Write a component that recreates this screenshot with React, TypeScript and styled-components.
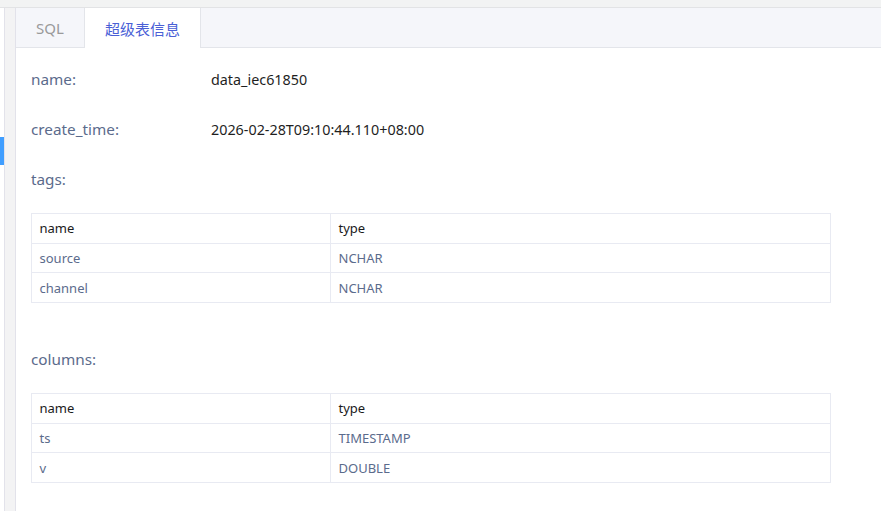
import React from "react";
import styled, { createGlobalStyle } from "styled-components";

const GlobalStyle = createGlobalStyle`
  html, body {
    margin: 0;
    padding: 0;
    background: #ffffff;
  }
  body {
    font-family: "Noto Sans", "Noto Sans CJK SC", sans-serif;
  }
`;

type Field = { name: string; type: string };

const tags: Field[] = [
  { name: "source", type: "NCHAR" },
  { name: "channel", type: "NCHAR" },
];

const columns: Field[] = [
  { name: "ts", type: "TIMESTAMP" },
  { name: "v", type: "DOUBLE" },
];

const FieldTable = ({ rows }: { rows: Field[] }) => (
  <STable>
    <thead>
      <tr>
        <SHeadCell $first>name</SHeadCell>
        <SHeadCell>type</SHeadCell>
      </tr>
    </thead>
    <tbody>
      {rows.map((r) => (
        <tr key={r.name}>
          <SCell $first>{r.name}</SCell>
          <SCell>{r.type}</SCell>
        </tr>
      ))}
    </tbody>
  </STable>
);

export default function App() {
  return (
    <>
      <GlobalStyle />
      <SPage>
        <STopStrip />
        <SBody>
          <SSidebar>
            <SSideItem />
          </SSidebar>
          <SSplitter />
          <SMain>
            <STabs>
              <STab>SQL</STab>
              <STab $active>超级表信息</STab>
            </STabs>
            <SContent>
              <SRow>
                <SLabel>name:</SLabel>
                <SValue>data_iec61850</SValue>
              </SRow>
              <SRow>
                <SLabel>create_time:</SLabel>
                <SValue>2026-02-28T09:10:44.110+08:00</SValue>
              </SRow>
              <SRow>
                <SLabel>tags:</SLabel>
              </SRow>
              <FieldTable rows={tags} />
              <SSpacer />
              <SRow>
                <SLabel>columns:</SLabel>
              </SRow>
              <FieldTable rows={columns} />
            </SContent>
          </SMain>
        </SBody>
      </SPage>
    </>
  );
}

const SPage = styled.div`
  display: flex;
  flex-direction: column;
  width: 881px;
  height: 511px;
  overflow: hidden;
`;
const STopStrip = styled.div`
  height: 7px;
  background: #f2f3f3;
  border-bottom: 1px solid #e2e3e5;
  flex-shrink: 0;
`;
const SBody = styled.div`
  display: flex;
  flex: 1;
  min-height: 0;
`;
const SSidebar = styled.div`
  width: 4px;
  background: #ffffff;
  padding-top: 129px;
  flex-shrink: 0;
`;
const SSideItem = styled.div`
  height: 28px;
  background: #409eff;
`;
const SSplitter = styled.div`
  width: 10px;
  background: #f3f3f4;
  border-left: 1px solid #e2e2ea;
  border-right: 1px solid #e2e2ea;
  flex-shrink: 0;
`;
const SMain = styled.div`
  flex: 1;
  display: flex;
  flex-direction: column;
  min-width: 0;
`;
const STabs = styled.div`
  display: flex;
  height: 39px;
  background: #f5f6fa;
  border-bottom: 1px solid #e3e5ea;
  flex-shrink: 0;
`;
const STab = styled.div<{ $active?: boolean }>`
  display: flex;
  align-items: center;
  justify-content: center;
  box-sizing: border-box;
  width: ${(p) => (p.$active ? "117px" : "68px")};
  height: ${(p) => (p.$active ? "40px" : "39px")};
  font-size: 15px;
  color: ${(p) => (p.$active ? "#4a5fd6" : "#9a9a9a")};
  background: ${(p) => (p.$active ? "#ffffff" : "transparent")};
  border-left: 1px solid ${(p) => (p.$active ? "#e3e5ea" : "transparent")};
  border-right: 1px solid ${(p) => (p.$active ? "#e3e5ea" : "transparent")};
`;
const SContent = styled.div`
  padding: 6px 0 0 15px;
`;
const SRow = styled.div`
  display: flex;
  align-items: center;
  height: 50px;
`;
const SLabel = styled.div`
  width: 180px;
  font-size: 15.3px;
  color: #5b6b8c;
`;
const SValue = styled.div`
  font-size: 14.35px;
  color: #1f1f1f;
`;
const SSpacer = styled.div`
  height: 31px;
`;
const STable = styled.table`
  width: 800px;
  margin-top: 9px;
  border-collapse: collapse;
  table-layout: fixed;
  font-size: 13px;
`;
const SHeadCell = styled.th<{ $first?: boolean }>`
  height: 29.7px;
  padding: 0 7.5px;
  box-sizing: border-box;
  text-align: left;
  font-weight: normal;
  color: #1a1a1a;
  border: 1px solid #e8eaf2;
  width: ${(p) => (p.$first ? "299px" : "auto")};
`;
const SCell = styled.td<{ $first?: boolean }>`
  height: 29.7px;
  padding: 0 7.5px;
  box-sizing: border-box;
  color: #5b6b8c;
  border: 1px solid #e8eaf2;
  width: ${(p) => (p.$first ? "299px" : "auto")};
`;
